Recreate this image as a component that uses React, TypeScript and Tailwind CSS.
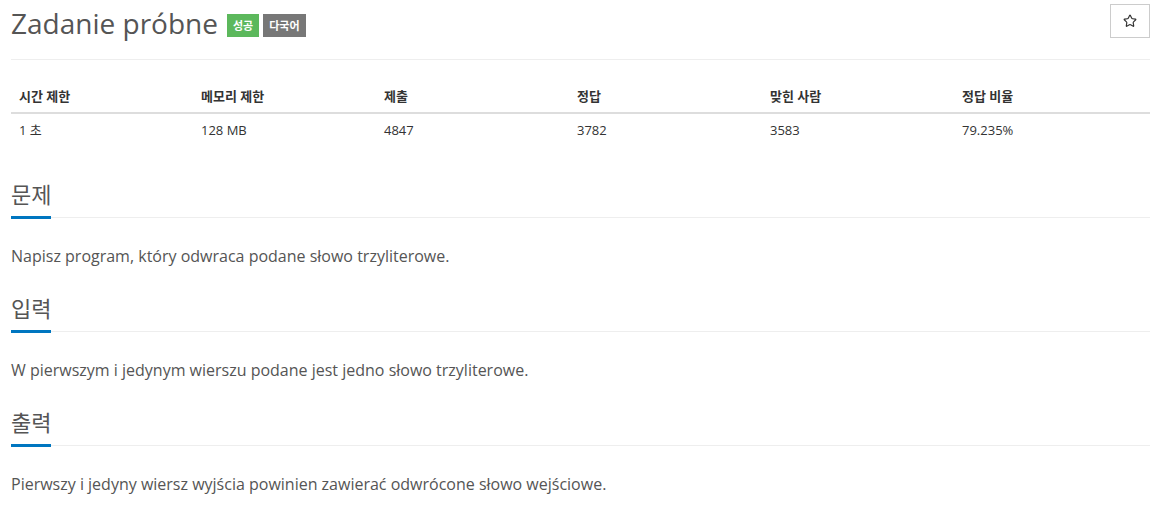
import { Star } from 'lucide-react';

const stats = [
  { label: '시간 제한', value: '1 초', w: 'w-[182px]' },
  { label: '메모리 제한', value: '128 MB', w: 'w-[183px]' },
  { label: '제출', value: '4847', w: 'w-[193px]' },
  { label: '정답', value: '3782', w: 'w-[193px]' },
  { label: '맞힌 사람', value: '3583', w: 'w-[192px]' },
  { label: '정답 비율', value: '79.235%', w: 'flex-1' },
];

const sections = [
  { title: '문제', body: 'Napisz program, który odwraca podane słowo trzyliterowe.' },
  { title: '입력', body: 'W pierwszym i jedynym wierszu podane jest jedno słowo trzyliterowe.' },
  { title: '출력', body: 'Pierwszy i jedyny wiersz wyjścia powinien zawierać odwrócone słowo wejściowe.' },
];

const App = () => {
  return (
    <div className="min-h-[519px] bg-white px-[11px] text-[#555] font-['Open_Sans','Noto_Sans_CJK_KR',sans-serif]">
      {/* header */}
      <div className="flex items-start justify-between border-b border-[#eee] pb-[18px]">
        <div className="flex items-center pt-[5px]">
          <h1 className="text-[28px] leading-[36px] font-normal text-[#555]">Zadanie próbne</h1>
          <span className="ml-[9px] mt-[4px] bg-[#5cb85c] px-[6px] py-[3px] text-[11px] leading-[17px] text-white font-bold">성공</span>
          <span className="ml-[4px] mt-[4px] bg-[#777] px-[6px] py-[3px] text-[11px] leading-[17px] text-white font-bold">다국어</span>
        </div>
        <button className="mt-[4px] flex h-[34px] w-[40px] items-center justify-center border border-[#ccc] bg-white">
          <Star className="h-[14px] w-[14px] text-[#333]" strokeWidth={2} />
        </button>
      </div>

      {/* stats table */}
      <div className="mt-[19px] text-[13px] text-[#333]">
        <div className="flex border-b-2 border-[#ddd]">
          {stats.map(s => (
            <div key={s.label} className={`${s.w} px-[8px] pt-[8px] pb-[7px] leading-[18px] font-bold`}>{s.label}</div>
          ))}
        </div>
        <div className="flex">
          {stats.map(s => (
            <div key={s.label} className={`${s.w} px-[8px] py-[7px] leading-[18px]`}>{s.value}</div>
          ))}
        </div>
      </div>

      {/* sections */}
      {sections.map((s, i) => (
        <section key={s.title} className={i === 0 ? 'mt-[33px]' : 'mt-[25px]'}>
          <div className="border-b border-[#eee]">
            <h2 className="-mb-[2px] inline-block border-b-[3px] border-[#0076c0] pb-[7px] text-[22px] leading-[30px] font-normal text-[#555]">
              {s.title}
            </h2>
          </div>
          <p className="mt-[26px] text-[16px] leading-[24px] text-[#555]">{s.body}</p>
        </section>
      ))}
    </div>
  );
};

export default App;
